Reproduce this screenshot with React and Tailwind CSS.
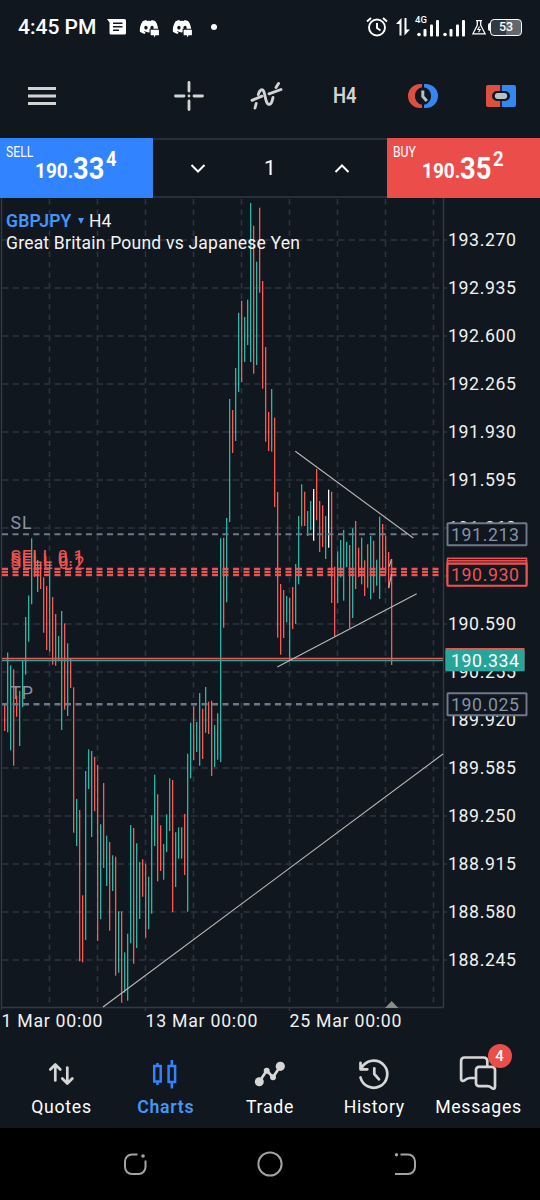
import React from 'react'
import { FaDiscord } from 'react-icons/fa'

const UP = '#26a69a'
const DOWN = '#ef5350'
const BAR_UP = '#2ab5a6'
const BAR_DOWN = '#fa5a52'
const MARK = '#ffffff'
const MUTED = '#6f7788'

// one entry per bar, 3px apart: [high, low, colour]
const bars = [
  [704.3, 731, BAR_DOWN], [652.5, 732.3, BAR_UP], [665.3, 750.3, BAR_UP], [669.3, 765.7, BAR_DOWN],
  [695.7, 716.7, BAR_DOWN], [691, 746, BAR_UP], [661, 707, BAR_UP], [617, 674.7, BAR_UP],
  [595.5, 641.7, BAR_UP], [538.3, 604.3, BAR_UP], [550, 577, BAR_DOWN], [560, 592, BAR_UP],
  [562, 589, BAR_DOWN], [577.3, 632.7, BAR_DOWN], [586, 650, BAR_DOWN], [561.5, 651.5, BAR_UP],
  [597, 664.7, BAR_DOWN], [614, 665.7, BAR_DOWN], [636, 660, BAR_UP], [611, 730, BAR_UP],
  [623.3, 709.7, BAR_DOWN], [643.3, 716, BAR_UP], [659, 688, BAR_DOWN], [687.3, 832.7, BAR_DOWN],
  [799, 846, BAR_UP], [810, 961.3, BAR_DOWN], [895.3, 962.3, BAR_DOWN], [771, 940, BAR_UP],
  [749.3, 789, BAR_UP], [751, 837, BAR_UP], [756.7, 811.3, BAR_DOWN], [765, 941, BAR_DOWN],
  [824.3, 919.3, BAR_UP], [783, 868, BAR_DOWN], [835.7, 886, BAR_UP], [842, 930.7, BAR_DOWN],
  [855.3, 891, BAR_UP], [856.7, 975.7, BAR_DOWN], [911.3, 972.7, BAR_UP], [911.3, 1002.7, BAR_DOWN],
  [952.3, 992.7, BAR_UP], [933.7, 1000.7, BAR_UP], [825, 943.3, BAR_UP], [828, 963.7, BAR_DOWN],
  [843.3, 948, BAR_UP], [862, 919, BAR_UP], [859.3, 896.7, BAR_DOWN], [863.7, 937.7, BAR_DOWN],
  [876.7, 929.3, BAR_UP], [815.3, 913.7, BAR_UP], [774.7, 846, BAR_UP], [794.3, 881.3, BAR_DOWN],
  [825.3, 871, BAR_DOWN], [844, 879.7, BAR_UP], [814.3, 852, BAR_UP], [778.3, 831, BAR_UP],
  [780, 912, BAR_DOWN], [832.3, 887, BAR_UP], [827.3, 858.7, BAR_UP], [827.3, 858.7, BAR_UP],
  [814, 875, BAR_DOWN], [753.7, 911.7, BAR_UP], [722.7, 778.3, BAR_UP], [706.3, 760, BAR_DOWN],
  [722, 752, BAR_UP], [693, 765.7, BAR_UP], [708.7, 759, BAR_DOWN], [687, 732.7, BAR_UP],
  [701.7, 734, BAR_DOWN], [700.7, 776, BAR_DOWN], [725, 767, BAR_UP], [713.3, 759.7, BAR_UP],
  [538.3, 762, BAR_UP], [537.7, 627.7, BAR_DOWN], [518, 602.3, BAR_UP], [399, 522, BAR_UP],
  [410, 453, BAR_DOWN], [368, 441, BAR_UP], [312.7, 392, BAR_UP], [300.7, 382, BAR_DOWN],
  [317, 362, BAR_UP], [299.7, 345, BAR_UP], [203, 362, BAR_UP], [225.7, 373.7, BAR_DOWN],
  [261.7, 365, BAR_UP], [207.7, 292.7, BAR_DOWN], [281, 388.7, BAR_DOWN], [347, 441.7, BAR_DOWN],
  [412, 451, BAR_DOWN], [389, 451.7, BAR_UP], [417.7, 507, BAR_DOWN], [492, 637.7, BAR_DOWN],
  [584, 654.7, BAR_DOWN], [590, 638, BAR_DOWN], [596, 622.3, BAR_UP], [597.7, 660, BAR_UP],
  [587, 629, BAR_DOWN], [564, 624, BAR_UP], [516, 584.3, BAR_UP], [484.3, 526.3, BAR_UP],
  [491.7, 526, BAR_DOWN], [511, 536, BAR_UP], [501, 530, BAR_UP], [489, 540.7, MARK],
  [469, 520.3, BAR_DOWN], [501, 552, BAR_DOWN], [505.3, 547, BAR_DOWN], [516, 559, BAR_UP],
  [489.7, 547.7, MARK], [491.7, 603, BAR_DOWN], [566.7, 636.7, BAR_DOWN], [551.3, 603, BAR_UP],
  [540, 577.3, BAR_UP], [530, 600.7, BAR_UP], [542, 567, BAR_UP], [545, 628.3, BAR_DOWN],
  [528.3, 618, BAR_UP], [521, 589, BAR_DOWN], [547.7, 577, BAR_DOWN], [537.7, 584.3, BAR_UP],
  [560.3, 596, BAR_DOWN], [544.3, 587.7, BAR_DOWN], [536, 599.3, BAR_UP], [540.7, 592.7, BAR_DOWN],
  [559.7, 585.7, BAR_UP], [516.7, 599, BAR_UP], [524, 569, BAR_DOWN], [535.7, 574, BAR_DOWN],
  [552, 588.3, BAR_DOWN], [559, 665, BAR_DOWN],
]

const priceLabels = [
  '193.270', '192.935', '192.600', '192.265', '191.930', '191.595', '191.260', '190.925',
  '190.590', '190.255', '189.920', '189.585', '189.250', '188.915', '188.580', '188.245',
]

const gridColumns = [49, 97, 145, 193, 241, 289, 337, 385, 433]

const dates = [
  { x: 1, label: '1 Mar 00:00', width: 101 },
  { x: 145, label: '13 Mar 00:00', width: 112 },
  { x: 289, label: '25 Mar 00:00', width: 112 },
]

const StatusBar = () => (
  <div className="flex h-[54px] items-center text-white">
    <span className="ml-[18px] w-[78px] whitespace-nowrap text-[21px] font-medium leading-none">
      4:45 PM
    </span>
    <svg className="ml-[11px] h-4 w-5" viewBox="0 0 20 16" fill="none">
      <path d="M0 0h17.5a1.5 1.5 0 0 1 1.5 1.5V14a1.5 1.5 0 0 1-1.5 1.5H4A1.5 1.5 0 0 1 2.500 14V3.500Z" fill="#fff" />
      <path d="M6 4.300h9.500M6 7.800h9.500M6 11.300h6" stroke="#10171f" strokeWidth="1.500" />
    </svg>
    {[0, 1].map((item) => (
      <span key={item} className={`relative h-5 w-5 ${item ? 'ml-[13px]' : 'ml-[12px]'}`}>
        <FaDiscord className="h-5 w-5" />
        <svg className="absolute -bottom-px -right-px h-[11px] w-[11px]" viewBox="0 0 10 10">
          <path d="M1.500 2.500h7.500v5h-3l-1.500 2v-2h-3z" fill="#fff" stroke="#10171f" strokeWidth="2" paintOrder="stroke" />
        </svg>
      </span>
    ))}
    <span className="ml-[19px] h-1.5 w-1.5 rounded-full bg-white" />

    <div className="ml-auto mr-[18px] flex items-center">
      <svg className="h-[22px] w-[22px]" viewBox="0 0 22 22" fill="none" stroke="#fff" strokeWidth="1.900">
        <circle cx="11" cy="11.500" r="8" />
        <path d="M11 7v5l3.500 2.500M1 5.500 5 2M21 5.500 17 2" />
      </svg>
      <svg className="ml-[8px] h-[18px] w-[14px]" viewBox="0 0 14 18" fill="#fff">
        <path d="M5.500 0v17.500h-2V6H0ZM8.500 0h2v11.500H14L8.500 17.500Z" />
      </svg>
      <span className="relative ml-[7px] h-[22px] w-[23px]">
        <span className="absolute -left-[2px] -top-[1px] text-[9.500px] font-medium leading-none">4G</span>
        <svg className="h-[22px] w-[23px]" viewBox="0 0 23 22" fill="#fff">
          <circle cx="2" cy="18.500" r="1.800" />
          <rect x="6.500" y="13" width="3" height="7.500" rx="1" />
          <rect x="13" y="8.500" width="3" height="12" rx="1" />
          <rect x="19" y="4" width="3" height="16.500" rx="1" />
        </svg>
      </span>
      <svg className="ml-[3px] h-[22px] w-[23px]" viewBox="0 0 23 22" fill="#fff">
        <circle cx="2" cy="18.500" r="1.800" />
        <rect x="6.500" y="13" width="3" height="7.500" rx="1" />
        <rect x="13" y="8.500" width="3" height="12" rx="1" />
        <rect x="19" y="4" width="3" height="16.500" rx="1" />
      </svg>
      <svg className="ml-[6px] h-[15px] w-[14px]" viewBox="0 0 14 15" fill="none" stroke="#fff" strokeWidth="1.300">
        <path d="M4 .7h6M5.300.7v4.500L.9 13.800h12.200L8.700 5.200V.7" />
        <path d="M7.500 6.500 5.800 9.500h2.400L6.500 12.300" strokeWidth="1.100" />
      </svg>
      <span className="ml-[2px] h-[8px] w-[2px] rounded-l-[2px] bg-white" />
      <span className="flex h-[17px] w-[32px] items-center justify-center rounded-[4px] border-[1.500px] border-white bg-gradient-to-r from-[#323940] from-50% to-[#62686e] to-50% text-[12.500px] font-medium leading-none">
        53
      </span>
    </div>
  </div>
)

const Toolbar = () => (
  <div className="flex h-[84px] items-center text-[#d3d3d3]">
    <svg className="ml-7 h-5 w-7" viewBox="0 0 28 20" stroke="currentColor" strokeWidth="3">
      <path d="M0 2.500h28M0 10h28M0 17.500h28" />
    </svg>
    <svg className="ml-[118px] h-[30px] w-[30px]" viewBox="0 0 30 30" stroke="currentColor" strokeWidth="2.800" strokeLinecap="round">
      <path d="M15 1.500v8.500M15 20v8.500M1.500 15H10M20 15h8.500M15 15h.01" />
    </svg>
    <svg className="ml-[36px] h-[44px] w-[50px]" viewBox="0 0 50 44" fill="none" stroke="currentColor" strokeWidth="2.900" strokeLinecap="round">
      <path d="M12 26.300 22 22.200M29 19.800 41 15.500M15 34l1.200-4.500M36 13.500l2.500-4" />
      <path d="M18.300 20.500C19.500 16 22.300 14 23.800 17.500 25.300 21 25.500 28.500 28 30 31 31.700 32.300 27 33 23.500" />
    </svg>
    <span className="ml-[43px] w-[24px] whitespace-nowrap text-[22px] font-semibold leading-none">
      <span className="inline-block origin-left scale-x-[.84]">H4</span>
    </span>
    <svg className="ml-[51px] h-6 w-[30px]" viewBox="0 0 30 24" fill="none">
      <path d="M14 0h-2a12 12 0 0 0 0 24h2v-3.200A9 9 0 0 1 14 3.200Z" fill="#dc5044" />
      <path d="M16 0h2a12 12 0 0 1 0 24h-2v-3.200A9 9 0 0 0 16 3.200Z" fill="#3487f0" />
      <path d="M14.800 6.500v6l4 4.500" stroke="#b4c2cc" strokeWidth="3" />
    </svg>
    <svg className="ml-12 h-[22px] w-[30px]" viewBox="0 0 30 22">
      <path d="M14.200 0H2a2 2 0 0 0-2 2v18a2 2 0 0 0 2 2h12.200v-6H11a5 5 0 0 1 0-10h3.200Z" fill="#dc5044" />
      <path d="M15.800 0H28a2 2 0 0 1 2 2v18a2 2 0 0 1-2 2H15.800v-6H19a5 5 0 0 0 0-10h-3.200Z" fill="#3487f0" />
      <rect x="8.800" y="8" width="12.400" height="6" rx="3" fill="#b4c2cc" />
    </svg>
  </div>
)

const Quote = ({ label, color, big, small }) => (
  <button className={`relative h-[60px] w-[153px] text-left font-bold text-white ${color}`}>
    <span className="absolute left-[6px] top-[7px] origin-left scale-x-[.84] text-[14.500px] font-normal leading-[16px]">
      {label}
    </span>
    <span className="flex h-full items-end pb-[17px] pl-[35px] leading-none">
      <span className="w-[38px] text-[20px] leading-[20px]">
        <span className="inline-block origin-left scale-x-[.95]">190.</span>
      </span>
      <span className="mb-[-3px] w-[33px] text-[31px] leading-[31px]">
        <span className="inline-block origin-left scale-x-[.88]">{big}</span>
      </span>
      <span className="mb-[12px] text-[20px] leading-[20px]">
        <span className="inline-block origin-left scale-x-[.92]">{small}</span>
      </span>
    </span>
  </button>
)

const TradePanel = () => (
  <div className="flex h-[60px]">
    <Quote label="SELL" color="bg-[#3183ff]" big="33" small="4" />
    <div className="flex flex-1 items-center justify-between border-y-2 border-[#26303c] px-[37px] pt-[2px] text-[21px] text-white">
      <svg className="h-4 w-4" viewBox="0 0 16 16" fill="none" stroke="#fff" strokeWidth="2">
        <path d="m1.500 4 6.500 6.500 6.500-6.500" />
      </svg>
      <span>1</span>
      <svg className="h-4 w-4" viewBox="0 0 16 16" fill="none" stroke="#fff" strokeWidth="2">
        <path d="m1.500 11 6.500-6.500 6.500 6.500" />
      </svg>
    </div>
    <Quote label="BUY" color="bg-[#eb4d4b]" big="35" small="2" />
  </div>
)

const PriceTag = ({ y, label, color, textColor = color }) => (
  <g>
    <rect x="447.500" y={y - 11} width="79" height="22" rx=".5" fill="#10171f" stroke={color} strokeWidth="2" />
    <text x="451" y={y + 6.3} fill={textColor} textLength="68">{label}</text>
  </g>
)

const Chart = () => (
  <div className="relative h-[840px]">
    <svg className="block h-[840px] w-[540px] text-[17.700px]" viewBox="0 198 540 840" fontFamily="Roboto, sans-serif">
      <g stroke="#2a3541" strokeWidth="1.500">
        {gridColumns.map((x) => (
          <path key={x} d={`M${x + 0.5} 199V1007`} strokeDasharray="5.500 5" />
        ))}
        {priceLabels.map((label, i) => (
          <path key={label} d={`M2 ${240 + i * 48}H443`} strokeDasharray="6.500 4" />
        ))}
        {priceLabels.map((label, i) => (
          <path key={label} d={`M443 ${240 + i * 48}h4`} />
        ))}
      </g>
      <g stroke="#303b48" strokeWidth="1.400" fill="none">
        <path d="M1.500 198V1010M443.500 198V1007.500M1 1007.500H443.500M145.500 1007v4M289.500 1007v4" />
      </g>

      <g fill="#8592a6">
        <text x="10.500" y="528.700" textLength="21">SL</text>
        <text x="10.500" y="699" textLength="22.500">TP</text>
      </g>
      <g fill={DOWN}>
        <text x="10.500" y="563.300" textLength="73">SELL 0.1</text>
        <text x="10.500" y="566.300" textLength="73">SELL 0.1</text>
        <text x="10.500" y="569" textLength="74">SELL 0.2</text>
      </g>

      {bars.map(([high, low, color], i) => (
        <rect key={i} x={4 + i * 3} y={high} width="1.300" height={low - high} fill={color} />
      ))}

      <g strokeDasharray="6 4.500">
        <path d="M2 534.300H439" stroke={MUTED} strokeWidth="2" />
        <path d="M2 704.200H439" stroke={MUTED} strokeWidth="2.500" />
        <path d="M2 568.800H439M2 571.800H439M2 574.800H439" stroke={DOWN} strokeWidth="2.200" />
      </g>
      <path d="M2 658.500H443" stroke={DOWN} strokeWidth="1.400" />
      <path d="M2 660.500H443" stroke={UP} strokeWidth="1.600" />

      <g stroke="#b9b9b9" strokeWidth="1.100">
        <path d="M295.300 451.300 413.300 538M277.300 667 416.700 593.700M103 1007 443 754" />
        <path d="M389.300 566.500 391.500 559M388.700 588 391.500 574" />
      </g>
      <path d="M385 1008h13.300l-6.600-7Z" fill="#8b8b8b" />

      <g fill="#f1f1f1">
        {priceLabels.map((label, i) => (
          <text key={label} x="448" y={246.2 + i * 48} textLength="68">{label}</text>
        ))}
        {dates.map(({ x, label, width }) => (
          <text key={label} x={x + 0.5} y="1027.300" textLength={width}>{label}</text>
        ))}
      </g>

      <PriceTag y={534.3} label="191.213" color={MUTED} textColor="#8592a6" />
      <PriceTag y={704.3} label="190.025" color={MUTED} textColor="#8592a6" />
      <g fill="#10171f" stroke={DOWN} strokeWidth="1.500">
        <rect x="447.500" y="558.300" width="79" height="22" />
        <rect x="447.500" y="560.800" width="79" height="22" />
        <rect x="447.500" y="563.300" width="79" height="22" />
      </g>
      <PriceTag y={574.8} label="190.930" color={DOWN} />
      <rect x="445.500" y="648" width="79" height="22" fill={DOWN} />
      <rect x="445.500" y="650" width="79" height="21.300" fill={UP} />
      <text x="451" y="666.700" fill="#fff" textLength="68">190.334</text>
    </svg>

    <div className="absolute left-[6px] top-[12px] whitespace-nowrap text-[17.500px] leading-[22px] text-[#f4f4f4]">
      <div className="flex items-center">
        <span className="w-[67px] font-semibold tracking-[.2px] text-[#4496f8]">GBPJPY</span>
        <span className="ml-[5px] mr-[5px] border-x-[3px] border-t-[6px] border-x-transparent border-t-[#4496f8]" />
        <span>H4</span>
      </div>
      <div className="tracking-[.22px]">Great Britain Pound vs Japanese Yen</div>
    </div>
  </div>
)

const tabs = [
  {
    label: 'Quotes',
    icon: (
      <path d="M12.300 27.500V12M7.300 16.500l5-5 5 5M24.300 14.500V30M19.300 25.500l5 5 5-5" />
    ),
  },
  {
    label: 'Charts',
    active: true,
    icon: (
      <g strokeWidth="2.500" strokeLinecap="butt" strokeLinejoin="miter">
        <path d="M7.200 13h6.500v15.500H7.200ZM10.500 10v3M10.500 28.500V32M21.600 13h6.500v16h-6.500ZM24.800 7v6M24.800 29v6.500" />
      </g>
    ),
  },
  {
    label: 'Trade',
    icon: (
      <>
        <path d="m7.300 28.700 7.400-11.200 6.300 6.800 7.300-11" />
        <g fill="currentColor" stroke="none">
          <circle cx="7.300" cy="28.700" r="4.500" />
          <circle cx="14.700" cy="17.700" r="3" />
          <circle cx="21" cy="24.300" r="3" />
          <circle cx="28.300" cy="13.300" r="4.600" />
        </g>
      </>
    ),
  },
  {
    label: 'History',
    icon: (
      <path d="M4.500 24.500A13.600 13.600 0 1 0 7 12.700L4.700 16.200M4.500 9.800v6.500h6.800M18.300 15.300V21l4.700 5.300" />
    ),
  },
  {
    label: 'Messages',
    badge: 4,
    icon: (
      <>
        <path d="M27.300 13.500V8a3.500 3.500 0 0 0-3.500-3.500H4.300A3.200 3.200 0 0 0 1.100 7.700v18.500c0 2 2.200 2.300 3.600 1 1.800-1.600 3.300-2.200 5.300-2.200h4" />
        <path d="M19 13.800h13a3 3 0 0 1 3 3v17c0 2-1.800 2.500-3.200 1.200-1.500-1.300-2.500-1.800-4.500-1.800h-8.300a3 3 0 0 1-3-3V16.800a3 3 0 0 1 3-3Z" />
      </>
    ),
  },
]

const TabBar = () => (
  <nav className="flex h-[90px] justify-between pl-[9.500px] pr-[9.500px]">
    {tabs.map(({ label, icon, badge, active }) => (
      <button
        key={label}
        className={`relative flex w-[104px] flex-col items-center pt-[15px] ${active ? 'text-[#3183ff]' : 'text-[#d6d6d6]'}`}
      >
        <svg
          className="h-[42px] w-[37px] overflow-visible"
          viewBox="0 0 37 42"
          fill="none"
          stroke="currentColor"
          strokeWidth="2.700"
          strokeLinecap="round"
          strokeLinejoin="round"
        >
          {icon}
        </svg>
        <span
          className={`mt-px whitespace-nowrap text-[17.700px] leading-[22px] tracking-[.7px] ${active ? 'font-semibold text-[#4496f8]' : 'font-normal text-white'}`}
        >
          {label}
        </span>
        {badge && (
          <span className="absolute left-[61px] top-[6px] flex h-6 w-6 items-center justify-center rounded-full bg-[#eb4d4b] text-[15px] font-medium text-white">
            {badge}
          </span>
        )}
      </button>
    ))}
  </nav>
)

const SystemNav = () => (
  <div className="flex h-[72px] items-center justify-center gap-[107px] bg-black text-[#a3a3a3]">
    <svg className="h-7 w-7" viewBox="0 0 28 28" fill="none" stroke="currentColor" strokeWidth="2">
      <path d="M16.500 4.500H11a7 7 0 0 0-7 7V17a7 7 0 0 0 7 7h6.500a7 7 0 0 0 7-7v-6.500" />
      <circle cx="22" cy="6" r="1.800" fill="currentColor" stroke="none" />
    </svg>
    <svg className="h-7 w-7" viewBox="0 0 28 28" fill="none" stroke="currentColor" strokeWidth="2">
      <circle cx="14" cy="14" r="11.600" />
    </svg>
    <svg className="h-7 w-7" viewBox="0 0 28 28" fill="none" stroke="currentColor" strokeWidth="2">
      <path d="M9.500 4.500H17a7 7 0 0 1 7 7V17a7 7 0 0 1-7 7H4" />
      <circle cx="5.500" cy="4.700" r="1.700" fill="currentColor" stroke="none" />
    </svg>
  </div>
)

const App = () => (
  <div className="flex h-[1200px] w-[540px] flex-col overflow-hidden bg-[#10171f] font-[Roboto,sans-serif]">
    <StatusBar />
    <Toolbar />
    <TradePanel />
    <Chart />
    <TabBar />
    <SystemNav />
  </div>
)

export default App
